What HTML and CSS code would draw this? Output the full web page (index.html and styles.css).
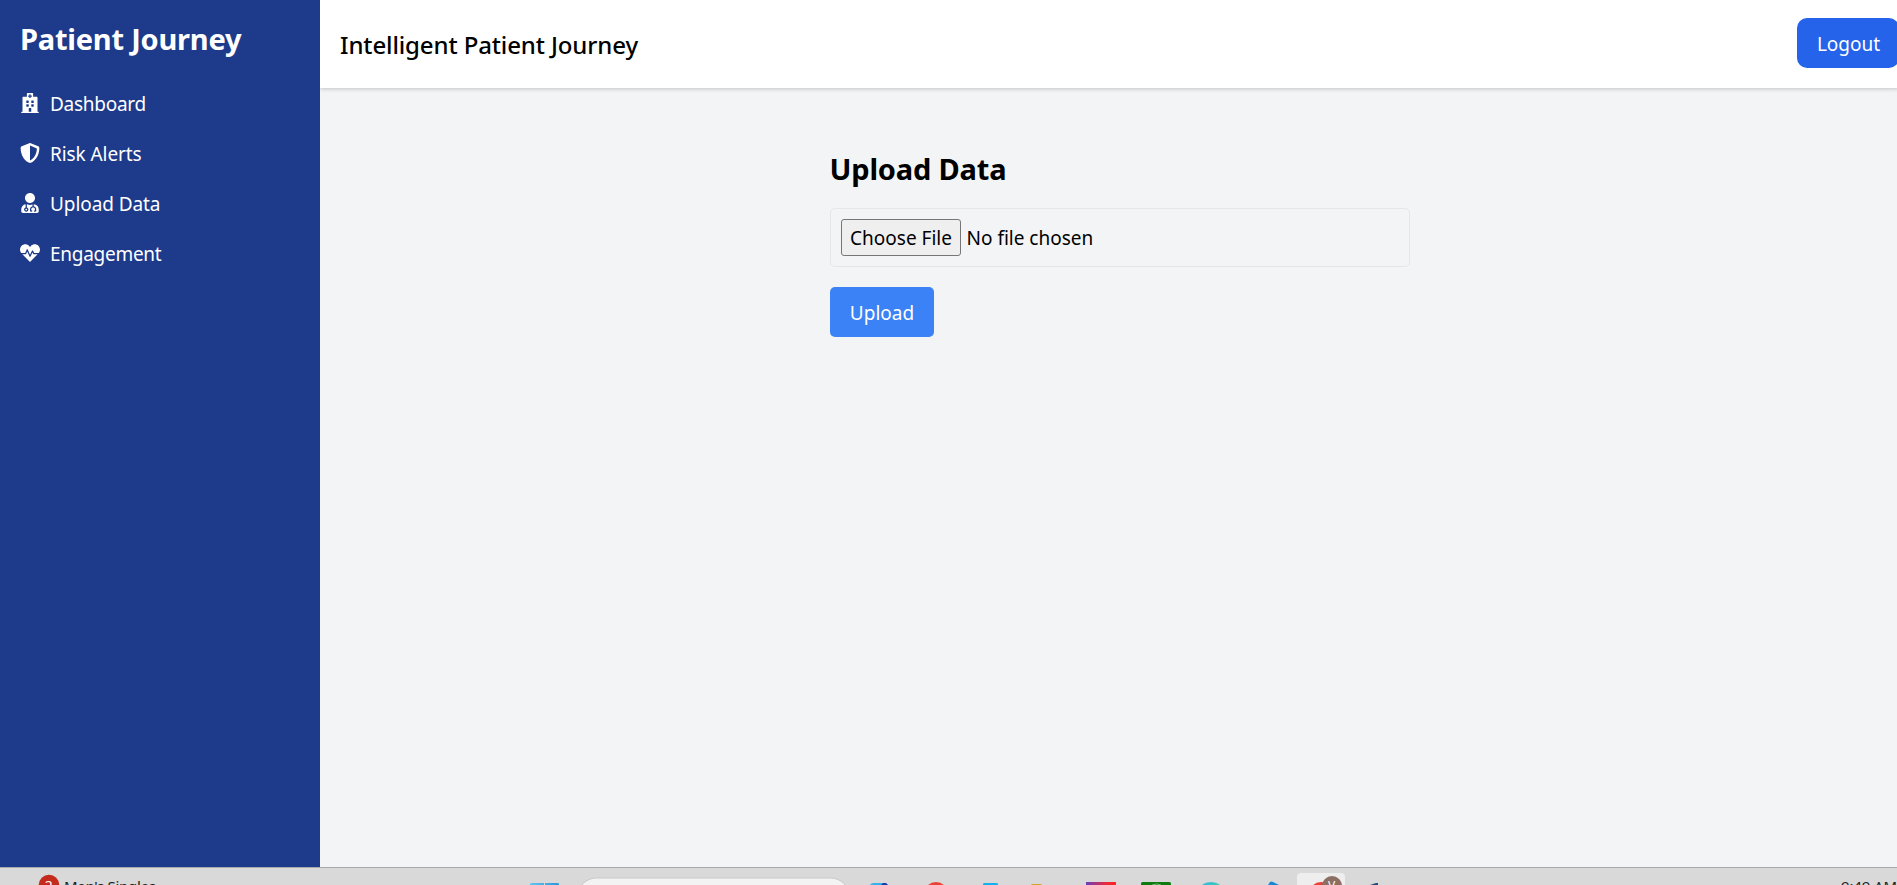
FILE: index.html
```html
<!DOCTYPE html>
<html lang="en">
<head>
<meta charset="utf-8">
<title>Patient Journey</title>
<link rel="stylesheet" href="styles.css">
</head>
<body>
<div class="app">
  <aside class="sidebar">
    <h1 class="brand">Patient Journey</h1>
    <nav class="nav">
      <a class="nav-item"><svg class="icon" viewBox="0 0 448 512"><path d="M448 492v20H0v-20c0-6.627 5.373-12 12-12h20V120c0-13.255 10.745-24 24-24h88V24c0-13.255 10.745-24 24-24h112c13.255 0 24 10.745 24 24v72h88c13.255 0 24 10.745 24 24v360h20c6.627 0 12 5.373 12 12zM308 192h-40c-6.627 0-12 5.373-12 12v40c0 6.627 5.373 12 12 12h40c6.627 0 12-5.373 12-12v-40c0-6.627-5.373-12-12-12zm-168 64h40c6.627 0 12-5.373 12-12v-40c0-6.627-5.373-12-12-12h-40c-6.627 0-12 5.373-12 12v40c0 6.627 5.373 12 12 12zm104 128h-40c-6.627 0-12 5.373-12 12v84h64v-84c0-6.627-5.373-12-12-12zm64-96h-40c-6.627 0-12 5.373-12 12v40c0 6.627 5.373 12 12 12h40c6.627 0 12-5.373 12-12v-40c0-6.627-5.373-12-12-12zm-116 12c0-6.627-5.373-12-12-12h-40c-6.627 0-12 5.373-12 12v40c0 6.627 5.373 12 12 12h40c6.627 0 12-5.373 12-12v-40zM182 96h26v26a6 6 0 0 0 6 6h20a6 6 0 0 0 6-6V96h26a6 6 0 0 0 6-6V70a6 6 0 0 0-6-6h-26V38a6 6 0 0 0-6-6h-20a6 6 0 0 0-6 6v26h-26a6 6 0 0 0-6 6v20a6 6 0 0 0 6 6z"/></svg><span class="label label-tight">Dashboard</span></a>
      <a class="nav-item"><svg class="icon" viewBox="0 0 512 512"><path d="M466.5 83.7l-192-80a48.15 48.15 0 0 0-36.9 0l-192 80C27.7 91.1 16 108.6 16 128c0 198.5 114.5 335.7 221.5 380.3 11.8 4.9 25.1 4.9 36.9 0C360.1 472.6 496 349.3 496 128c0-19.4-11.7-36.9-29.5-44.3zM256.1 446.3l-.1-381 175.9 73.3c-3.3 151.4-82.1 261.1-175.8 307.7z"/></svg><span class="label">Risk Alerts</span></a>
      <a class="nav-item"><svg class="icon" viewBox="0 0 448 512"><path d="M224 256c70.7 0 128-57.3 128-128S294.7 0 224 0 96 57.3 96 128s57.3 128 128 128zM104 424c0 13.3 10.7 24 24 24s24-10.7 24-24-10.7-24-24-24-24 10.7-24 24zm216-135.4v49c36.5 7.4 64 39.8 64 78.4v41.7c0 7.6-5.4 14.2-12.9 15.7l-32.2 6.4c-4.3.9-8.5-1.9-9.4-6.3l-3.1-15.7c-.9-4.3 1.9-8.6 6.3-9.4l19.3-3.9V416c0-62.8-96-65.1-96 1.9v26.7l19.3 3.9c4.3.9 7.1 5.1 6.3 9.4l-3.1 15.7c-.9 4.3-5.1 7.1-9.4 6.3l-31.2-4.2c-7.9-1.1-13.8-7.8-13.8-15.9V416c0-38.6 27.5-70.9 64-78.4v-45.2c-2.2.7-4.4 1.1-6.6 1.9-18 6.3-37.3 9.8-57.4 9.8s-39.4-3.5-57.4-9.8c-7.4-2.6-14.9-4.2-22.6-5.2v81.6c23.1 6.9 40 28.1 40 53.4 0 30.9-25.1 56-56 56s-56-25.1-56-56c0-25.3 16.9-46.5 40-53.4v-80.4C48.5 301 0 355.8 0 422.4v44.8C0 491.9 20.1 512 44.8 512h358.4c24.7 0 44.8-20.1 44.8-44.8v-44.8c0-72-56.8-130.3-128-133.8z"/></svg><span class="label">Upload Data</span></a>
      <a class="nav-item"><svg class="icon" viewBox="0 0 512 512"><path d="M320.2 243.8l-49.7 99.4c-6 12.1-23.4 11.7-28.9-.6l-56.9-126.3-30 71.7H60.6l182.5 186.5c7.1 7.3 18.6 7.3 25.7 0L451.4 288H342.3l-22.1-44.2zM473.7 73.9l-2.4-2.5c-51.5-52.6-135.8-52.6-187.4 0L256 100l-27.9-28.5c-51.5-52.7-135.9-52.7-187.4 0l-2.4 2.4C-10.4 123.7-12.5 203 31 256h102.4l35.9-86.2c5.4-12.9 23.6-13.1 29.4-.4l58.2 129.3 49-97.9c5.9-11.8 22.7-11.8 28.6 0l27.6 55.2H481c43.5-53 41.4-132.3-7.3-182.1z"/></svg><span class="label label-tight">Engagement</span></a>
    </nav>
  </aside>
  <div class="content">
    <header class="topbar">
      <h2 class="title">Intelligent Patient Journey</h2>
      <button class="logout">Logout</button>
    </header>
    <main class="main">
      <section class="upload">
        <h2 class="heading">Upload Data</h2>
        <div class="file">
          <button class="choose">Choose File</button>
          <span class="file-name">No file chosen</span>
        </div>
        <button class="submit">Upload</button>
      </section>
    </main>
  </div>
</div>
<footer class="taskbar">
  <svg class="tray" width="1897" height="18" viewBox="0 867 1897 18">
    <defs>
      <linearGradient id="win" x1="0" x2="1"><stop offset="0" stop-color="#62c6f0"/><stop offset="1" stop-color="#2b96dc"/></linearGradient>
      <linearGradient id="ide" x1="0" x2="1"><stop offset="0" stop-color="#6a3fbd"/><stop offset=".7" stop-color="#f02a35"/><stop offset="1" stop-color="#ff2420"/></linearGradient>
      <linearGradient id="edge" x1="0" x2="1"><stop offset="0" stop-color="#2db4e8"/><stop offset="1" stop-color="#43cfa8"/></linearGradient>
    </defs>
    <circle cx="44" cy="888" r="6.5" fill="#f2c21b"/>
    <circle cx="49" cy="885" r="10.3" fill="#c42b1c"/>
    <text class="badge-count" x="44.8" y="891">2</text>
    <text class="tray-text" x="64" y="892" textLength="92">Men's Singles</text>
    <path d="M530 885v-1q0-1 2-1h12v2zM545 885v-2h12q2 0 2 1v1z" fill="url(#win)"/>
    <rect x="577.5" y="878" width="272" height="38" rx="19" fill="#f3f3f3" stroke="#c9c9c9"/>
    <path d="M870 885q1-2 4-2h9v2z" fill="#35b1ed"/><path d="M881 885l2-2h3l2 2z" fill="#173bb0"/>
    <circle cx="936" cy="894" r="12" fill="#ea4335"/>
    <path d="M983 885v-1q0-1 2-1h11q2 0 2 1v1z" fill="#10b2f1"/>
    <path d="M1031 885q0-1 2-1h7q2 0 2 1z" fill="#d6a229"/>
    <rect x="1086" y="882" width="30" height="6" fill="url(#ide)"/>
    <rect x="1141" y="882" width="30" height="6" rx="1.5" fill="#107c10"/><path d="M1152 885q5-2 9 0" fill="none" stroke="#7dbb7d"/>
    <ellipse cx="1211" cy="894" rx="14" ry="12" fill="url(#edge)"/>
    <path d="M1268 885l2-3q1-1 3 0l6 3z" fill="#1688d5"/>
    <rect x="1297" y="873" width="48" height="30" rx="4" fill="#eeeeee"/>
    <circle cx="1321" cy="894" r="12" fill="#ea4335"/>
    <circle cx="1332" cy="886" r="10" fill="#8d6e63"/>
    <text class="avatar-letter" x="1328" y="890">V</text>
    <path d="M1370 885l6-2h2v2z" fill="#244a82"/>
    <text class="tray-text" x="1841" y="892" textLength="56">9:49 AM</text>
  </svg>
</footer>
</body>
</html>
```
FILE: styles.css
```css
* { box-sizing: border-box; }
html { font-size: 20px; }
body {
  margin: 0;
  height: 885px;
  overflow: hidden;
  display: flex;
  flex-direction: column;
  font-family: "Noto Sans", "Open Sans", sans-serif;
  color: #000;
}
h1, h2 { margin: 0; }
button { font-family: inherit; margin: 0; white-space: nowrap; }

.app { display: flex; height: 867px; background: #f3f4f6; }

.sidebar { width: 320px; flex: none; padding: 19px 20px 20px; background: #1e3a8a; color: #fff; }
.brand { font-size: 29px; line-height: 40px; font-weight: 700; letter-spacing: -0.22px; white-space: nowrap; }
.nav { margin-top: 29px; display: flex; flex-direction: column; gap: 20px; }
.nav-item { display: flex; align-items: center; gap: 10px; height: 30px; font-size: 19px; line-height: 28px; white-space: nowrap; }
.label { padding-top: 2px; letter-spacing: -0.08px; }
.label-tight { letter-spacing: -0.27px; }
.icon { width: 20px; height: 20px; fill: currentColor; flex: none; }

.content { flex: 1; min-width: 0; display: flex; flex-direction: column; }
.topbar {
  height: 88px;
  flex: none;
  display: flex;
  justify-content: space-between;
  align-items: center;
  padding-left: 20px;
  margin-right: -2px;
  padding-bottom: 2px;
  background: #fff;
  box-shadow: 0 1px 4px rgba(0, 0, 0, .2);
  clip-path: inset(0 0 -8px 0);
}
.title { font-size: 24px; line-height: 35px; font-weight: 500; letter-spacing: -0.12px; padding-top: 2px; }
.logout { width: 102px; height: 50px; border: 0; border-radius: 10px; background: #2563eb; color: #fff; font-size: 19px; padding: 2px 0 0 1px; }

.main { flex: 1; display: flex; justify-content: center; padding: 61px 0 0 22px; }
.upload { width: 580px; display: flex; flex-direction: column; align-items: flex-start; }
.heading { font-size: 29px; line-height: 40px; font-weight: 700; letter-spacing: -0.18px; }
.file {
  width: 580px;
  height: 59px;
  margin-top: 19px;
  padding: 0 10px;
  display: flex;
  align-items: center;
  gap: 6px;
  border: 1px solid #e5e7eb;
  border-radius: 5px;
  font-size: 19px;
}
.choose { width: 120px; height: 37px; padding: 0 0 0 1px; border: 1px solid #767676; border-radius: 3px; background: #efefef; color: #000; font-size: 19px; }
.submit { width: 104px; height: 50px; margin-top: 20px; border: 0; border-radius: 5px; padding: 2px 0 0 1px; background: #3b82f6; color: #fff; font-size: 19px; }

.taskbar { height: 18px; flex: none; background: #d9d9d9; border-top: 1px solid #a9a9a9; overflow: hidden; }
.tray { display: block; margin-top: -1px; }
.tray-text { font-size: 15px; fill: #1c1c1c; }
.badge-count { font-size: 14px; fill: #fff; }
.avatar-letter { font-size: 12px; fill: #fff; }
```
